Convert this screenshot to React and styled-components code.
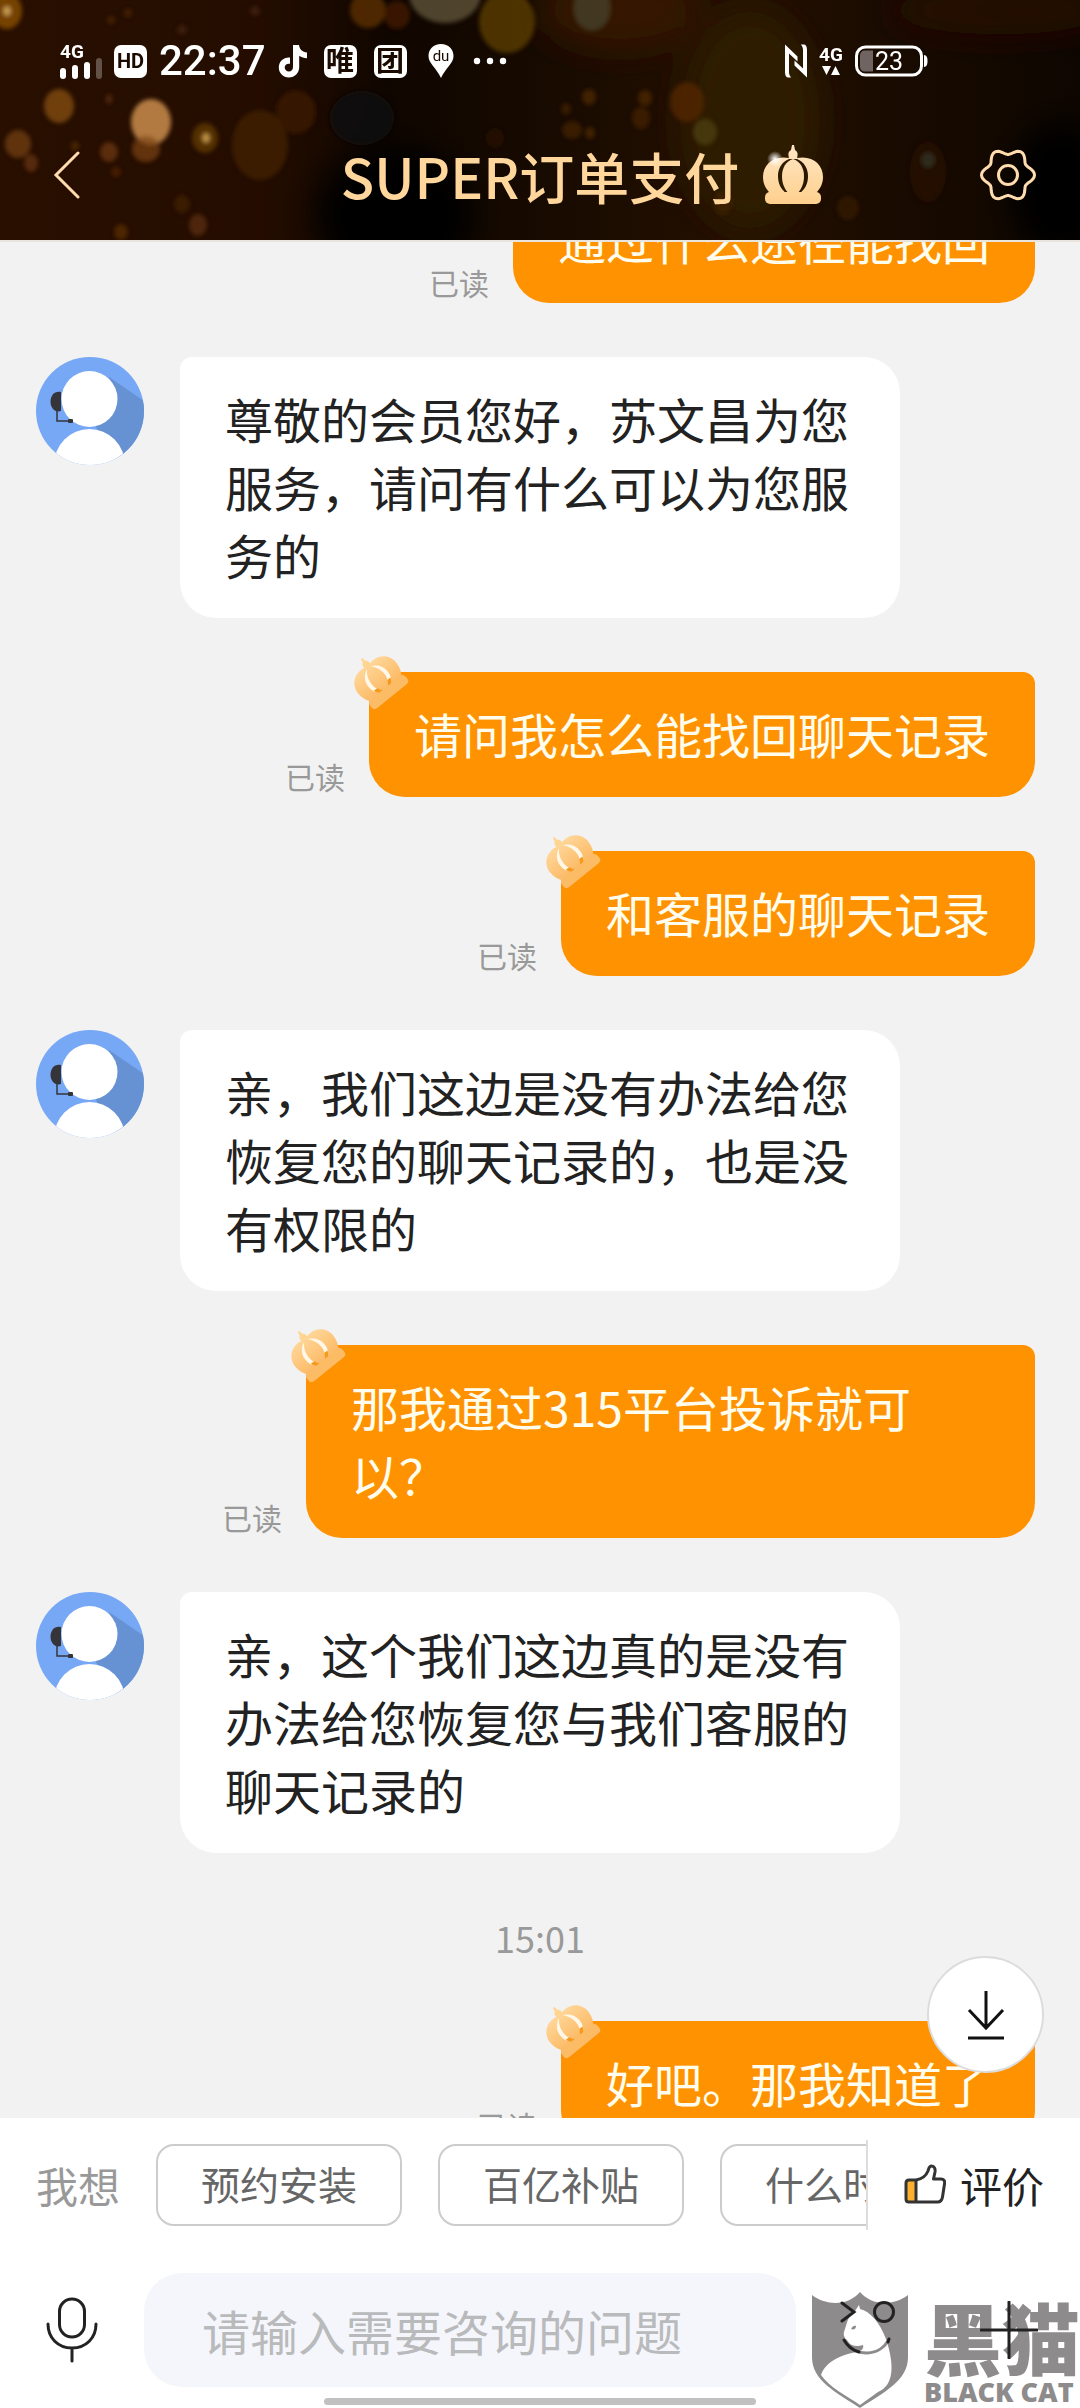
import styled, { createGlobalStyle } from "styled-components";
import { useLayoutEffect, useRef, useState } from "react";

const GlobalStyle = createGlobalStyle`
  * {
    box-sizing: border-box;
  }

  body {
    margin: 0;
    font-family: "Noto Sans CJK SC", sans-serif;
    background: #f2f2f2;
  }

  button {
    font-family: inherit;
    border: 0;
    padding: 0;
    background: none;
    cursor: pointer;
  }
`;

const Page = styled.div`
  display: flex;
  flex-direction: column;
  height: 100vh;
  overflow: hidden;
`;

const Header = styled.header`
  position: relative;
  flex: none;
  padding-bottom: 12px;
  overflow: hidden;
  background: #180b00;
  border-bottom: 2px solid #e9e4de;
`;

const Backdrop = styled.svg`
  position: absolute;
  inset: 0;
  width: 100%;
  height: 100%;
`;

const StatusBar = styled.div`
  position: relative;
  display: flex;
  align-items: center;
  justify-content: space-between;
  height: 122px;
  padding: 0 152px 0 60px;
  color: #fff;
  font-family: Roboto, "Noto Sans CJK SC", sans-serif;

  svg {
    overflow: visible;
  }
`;

const StatusGroup = styled.div`
  display: flex;
  align-items: center;
  gap: 12px;
`;

const AppGroup = styled.div`
  display: flex;
  align-items: center;
  gap: 17px;
  padding-left: 4px;
`;

const Clock = styled.span`
  font-size: 42px;
  line-height: 42px;
  font-weight: 500;
`;

const AppBadge = styled.span`
  display: flex;
  align-items: center;
  justify-content: center;
  width: 33px;
  height: 33px;
  border-radius: 7px;
  background: #fff;
  color: #1a0a00;
  font-size: ${({ $size }) => $size}px;
  line-height: 33px;
  font-weight: 700;
`;

const TitleBar = styled.div`
  position: relative;
  display: grid;
  grid-template-columns: 1fr auto 1fr;
  align-items: center;
  height: 106px;
  padding: 0 43px;

  svg {
    display: block;
  }
`;

const Title = styled.h1`
  margin: 0;
  color: #ffd79c;
  font-size: 55px;
  line-height: 80px;
  font-weight: 500;
`;

const TitleEnd = styled.div`
  display: flex;
  align-items: center;
  justify-content: space-between;
  padding-left: 24px;
`;

const BackButton = styled.button`
  width: 48px;
  height: 60px;
  padding-left: 10px;
`;

const ChatArea = styled.main`
  position: relative;
  flex: 1;
  min-height: 0;
`;

const MessageList = styled.div`
  display: flex;
  flex-direction: column;
  gap: 54px;
  height: 100%;
  padding: 54px 45px 54px 36px;
  overflow-y: auto;
  scrollbar-width: none;
`;

const Row = styled.div`
  display: flex;
  flex: none;
  align-items: ${({ $mine }) => ($mine ? "flex-end" : "flex-start")};
  justify-content: ${({ $mine }) => ($mine ? "flex-end" : "flex-start")};
  gap: ${({ $mine }) => ($mine ? 24 : 36)}px;

  > svg {
    flex: none;
  }
`;

const Bubble = styled.div`
  position: relative;
  max-width: ${({ $mine }) => ($mine ? 729 : 720)}px;
  padding: 27px 45px 30px;
  border-radius: ${({ $mine }) =>
    $mine ? "12px 12px 36px 36px" : "12px 36px 36px 36px"};
  background: ${({ $mine }) => ($mine ? "#ff9200" : "#fff")};
  color: ${({ $mine }) => ($mine ? "#fffdee" : "#222")};
  font-size: 48px;
  line-height: 68px;
`;

const CrownBadge = styled.svg`
  position: absolute;
  left: -20px;
  top: -24px;
`;

const ReadMark = styled.span`
  flex: none;
  color: #999;
  font-size: 30px;
  line-height: 42px;
`;

const TimeMark = styled.time`
  flex: none;
  /* the list is padded 9px more on the right than on the left */
  padding-left: 9px;
  text-align: center;
  color: #999;
  font-size: 36px;
  line-height: 60px;
`;

const ToBottom = styled.button`
  position: absolute;
  right: 36px;
  bottom: 45px;
  display: flex;
  align-items: center;
  justify-content: center;
  width: 117px;
  height: 117px;
  border: 2px solid #dcdcdc;
  border-radius: 50%;
  background: #fff;
`;

const Footer = styled.footer`
  position: relative;
  flex: none;
  background: #fff;
`;

const QuickRow = styled.div`
  display: flex;
  align-items: center;
  padding-top: 22px;
`;

const QuickLabel = styled.span`
  flex: none;
  padding: 0 36px;
  color: #999;
  font-size: 42px;
  line-height: 60px;
`;

const Chips = styled.div`
  display: flex;
  flex: 1;
  gap: 36px;
  min-width: 0;
  overflow: hidden;
`;

const Chip = styled.button`
  flex: none;
  height: 82px;
  padding: 0 43px 4px;
  border: 2px solid #ccc;
  border-radius: 18px;
  color: #666;
  font-size: 39px;
  line-height: 60px;
`;

const RateButton = styled.button`
  display: flex;
  flex: none;
  align-items: center;
  gap: 14px;
  height: 90px;
  padding: 0 36px;
  border-left: 2px solid #ddd;
  color: #222;
  font-size: 42px;
  line-height: 60px;
`;

const Composer = styled.form`
  position: relative;
  display: flex;
  align-items: center;
  padding: 43px 0 11px;
`;

const IconButton = styled.button`
  display: flex;
  flex: none;
  align-items: center;
  justify-content: center;
  width: ${({ $wide }) => ($wide ? 144 : 142)}px;
  height: 114px;
`;

const TextBox = styled.input`
  flex: 1;
  min-width: 0;
  height: 114px;
  padding: 0 58px;
  border: 0;
  border-radius: 38px;
  outline: 0;
  background: #f5f6fb;
  color: #222;
  font-family: inherit;
  font-size: 48px;

  &::placeholder {
    color: #b9babc;
    opacity: 1;
  }
`;

const HomeBar = styled.div`
  width: 40%;
  height: 7px;
  margin: 0 auto 3px;
  border-radius: 4px;
  background: #c1c1c1;
`;

const Watermark = styled.div`
  position: absolute;
  right: 0;
  bottom: 0;
  display: flex;
  align-items: flex-end;
  gap: 15px;
  color: #8e8b8c;
  pointer-events: none;

  svg {
    display: block;
  }
`;

const WatermarkName = styled.div`
  font-size: 78px;
  line-height: 80px;
  font-weight: 900;
`;

const WatermarkLatin = styled.div`
  font-family: "Open Sans", sans-serif;
  font-size: 27px;
  line-height: 32px;
  font-weight: 800;
`;

// cx, cy, rx, ry, colour, opacity
const lights = [
  [7, 11, 15, 18, "#8a5000", 0.8],
  [7, 11, 4, 5, "#d8b060", 0.8],
  [368, 10, 18, 18, "#5c2f02", 0.8],
  [397, 15, 13, 14, "#421b00", 0.8],
  [445, -6, 36, 29, "#544a30", 0.9],
  [507, 22, 28, 31, "#533606", 0.9],
  [592, 8, 19, 23, "#423c24", 0.9],
  [151, 122, 20, 23, "#b98045", 0.95],
  [146, 149, 14, 13, "#7c4512", 0.7],
  [59, 106, 15, 17, "#7c4812", 0.85],
  [205, 138, 13, 15, "#6a4008", 0.7],
  [206, 138, 4, 5, "#d6a850", 0.8],
  [18, 144, 13, 14, "#6a390c", 0.85],
  [31, 163, 7, 9, "#5c2d08", 0.9],
  [109, 152, 9, 10, "#64320a", 0.85],
  [260, 145, 28, 35, "#432405", 0.75],
  [296, 112, 20, 22, "#3d1a05", 0.75],
  [362, 118, 32, 27, "#121110", 0.9],
  [198, 225, 9, 11, "#55290a", 0.85],
  [182, 204, 8, 9, "#3d2006", 0.9],
  [121, 232, 7, 8, "#522706", 0.9],
  [75, 146, 4, 5, "#4b2706", 0.9],
  [116, 172, 5, 5, "#4a2006", 0.9],
  [109, 99, 4, 5, "#4c2608", 0.9],
  [128, 13, 4, 4, "#4c2608", 0.8],
  [111, 20, 4, 4, "#4c2608", 0.8],
  [182, 30, 5, 5, "#42200a", 0.8],
  [255, 11, 5, 5, "#42200a", 0.8],
  [687, 102, 17, 20, "#542402", 0.8],
  [705, 132, 12, 13, "#4e3f12", 0.8],
  [589, 97, 7, 8, "#452404", 0.9],
  [645, 98, 7, 8, "#452404", 0.9],
  [641, 118, 9, 11, "#3f1e04", 0.9],
  [572, 130, 10, 9, "#3f1e04", 0.9],
  [590, 133, 5, 6, "#452404", 0.9],
  [566, 109, 5, 6, "#3f1e04", 0.8],
  [495, 138, 9, 10, "#261200", 0.8],
  [723, 203, 9, 11, "#402004", 0.8],
  [848, 208, 11, 12, "#321a03", 0.8],
  [928, 172, 18, 30, "#281200", 0.8],
  [928, 160, 7, 8, "#303024", 0.8],
];

function HeaderBackdrop() {
  return (
    <Backdrop viewBox="0 0 1080 240" preserveAspectRatio="xMidYMid slice" aria-hidden="true">
      <defs>
        <linearGradient id="night" x1="0" x2="1" y1="0" y2="0">
          <stop offset="0" stopColor="#280f00" />
          <stop offset="0.24" stopColor="#240d00" />
          <stop offset="0.36" stopColor="#100600" />
          <stop offset="0.48" stopColor="#160a00" />
          <stop offset="0.68" stopColor="#241000" />
          <stop offset="0.86" stopColor="#170a00" />
          <stop offset="1" stopColor="#0e0600" />
        </linearGradient>
        <filter id="haze" x="-50%" y="-50%" width="200%" height="200%">
          <feGaussianBlur stdDeviation="16" />
        </filter>
        <filter id="soft" x="-50%" y="-50%" width="200%" height="200%">
          <feGaussianBlur stdDeviation="2" />
        </filter>
      </defs>
      <rect width="1080" height="240" fill="url(#night)" />
      <g filter="url(#haze)">
        <ellipse cx="395" cy="215" rx="80" ry="70" fill="#030000" />
        <ellipse cx="750" cy="120" rx="70" ry="110" fill="#2f1a00" />
        <ellipse cx="620" cy="10" rx="80" ry="40" fill="#361800" />
        <ellipse cx="1000" cy="10" rx="110" ry="24" fill="#261100" />
        <ellipse cx="1060" cy="190" rx="50" ry="70" fill="#040000" />
      </g>
      <g filter="url(#soft)">
        {lights.map(([cx, cy, rx, ry, fill, opacity], i) => (
          <ellipse key={i} cx={cx} cy={cy} rx={rx} ry={ry} fill={fill} opacity={opacity} />
        ))}
      </g>
    </Backdrop>
  );
}

function SignalIcon() {
  return (
    <svg width="42" height="38" viewBox="0 0 42 38" fill="#fff" aria-hidden="true">
      <text x="0" y="16" fontSize="19" fontWeight="700">4G</text>
      <rect x="0" y="26" width="6" height="11" rx="3" />
      <rect x="12" y="23" width="6" height="14" rx="3" />
      <rect x="24" y="20" width="6" height="17" rx="3" />
      <rect x="36" y="16" width="6" height="21" rx="3" opacity="0.28" />
    </svg>
  );
}

function NoteIcon() {
  return (
    <svg width="30" height="34" viewBox="0 0 30 34" aria-hidden="true">
      <path
        d="M15 1h6c.6 4.400 3.400 7 8 7.500v5.800c-3-.1-5.600-1-7.800-2.500V23c0 6-4.500 10.500-10.300 10.500C5.100 33.500.8 29 .8 23.500.8 17.500 5.800 13 12 13.600v6.200c-2.900-.6-5.300 1.100-5.300 3.700 0 2.300 1.900 4 4.200 4 2.400 0 4.100-1.700 4.100-4.500z"
        fill="#fff"
      />
    </svg>
  );
}

function PinIcon() {
  return (
    <svg width="32" height="34" viewBox="0 0 32 34" aria-hidden="true">
      <path d="M17 0C9.500 0 4.500 5.300 4.500 12c0 7.500 8 12 12.500 22 4.500-10 12.500-14.500 12.500-22C29.500 5.300 24.500 0 17 0z" fill="#fff" />
      <text x="17" y="17" fontSize="15" textAnchor="middle" fill="#1a0a00">du</text>
    </svg>
  );
}

function NfcIcon() {
  return (
    <svg width="22" height="34" viewBox="0 0 22 34" fill="#fff" aria-hidden="true">
      <path d="M0 .5 12.500 12.500v5L4 9.500V28c0 2.300.7 4 2.200 5.500H3.500C1 33.500 0 31.500 0 28z" />
      <path d="M22 33.500 9.500 21.500v-5l8.500 8V6c0-2.300-.7-4-2.200-5.500h2.700C21 .5 22 2.500 22 6z" />
    </svg>
  );
}

function DataIcon() {
  return (
    <svg width="24" height="32" viewBox="0 0 24 32" fill="#fff" aria-hidden="true">
      <text x="0" y="16" fontSize="19" fontWeight="700">4G</text>
      <path d="M3 21h9l-4.500 9zM12 30h9l-4.500-9z" />
    </svg>
  );
}

function BatteryIcon() {
  return (
    <svg width="73" height="32" viewBox="0 0 73 32" aria-hidden="true">
      <rect x="1.500" y="2" width="65" height="28" rx="9" fill="none" stroke="#fff" strokeWidth="3" />
      <path d="M10 5.500h8v21h-8c-3 0-5-2-5-5v-11c0-3 2-5 5-5z" fill="#706462" />
      <path d="M69 10c2.500.5 3.500 2 3.500 6s-1 5.500-3.500 6z" fill="#fff" />
      <text x="34" y="25" fontSize="25" textAnchor="middle" fill="#fff">23</text>
    </svg>
  );
}

function CrownIcon() {
  return (
    <svg width="60" height="60" viewBox="0 0 60 60" aria-hidden="true">
      <defs>
        <linearGradient id="gold" gradientUnits="userSpaceOnUse" x1="0" x2="0" y1="0" y2="60">
          <stop offset="0" stopColor="#ffe6c4" />
          <stop offset="1" stopColor="#ffcf8c" />
        </linearGradient>
        <radialGradient id="glint">
          <stop offset="0" stopColor="#fff" />
          <stop offset="1" stopColor="#fff" stopOpacity="0" />
        </radialGradient>
      </defs>
      <g fill="url(#gold)">
        <path d="M29 0h2l1 5c2 1 3 3 2.500 5.500L34 14h-8l-.5-3.500C25 8 26 6 28 5z" />
        <path d="M26 13C11 10 0 19 0 32c0 7 3 12 7 16h16c-5-4-8-9-8-17 0-8 4-14 11-17z" />
        <path d="M34 13c15-3 26 6 26 19 0 7-3 12-7 16H37c5-4 8-9 8-17 0-8-4-14-11-17z" />
        <path d="M30 14c-7 2-11 9-11 17 0 7 2 12 6 17h10c4-5 6-10 6-17 0-8-4-15-11-17z" />
        <rect x="2" y="47" width="56" height="12" rx="5" />
      </g>
      <circle cx="12" cy="14" r="8" fill="url(#glint)" />
    </svg>
  );
}

function gearPath(center, base, wave) {
  const points = [];
  for (let deg = 0; deg < 360; deg += 4) {
    const a = (deg * Math.PI) / 180;
    const r = base + wave * Math.cos(6 * a);
    points.push(`${(center + r * Math.cos(a)).toFixed(1)} ${(center + r * Math.sin(a)).toFixed(1)}`);
  }
  return `M${points.join("L")}Z`;
}

function GearIcon() {
  return (
    <svg width="58" height="58" viewBox="0 0 58 58" fill="none" stroke="#ffdcae" strokeWidth="3" strokeLinejoin="round" aria-hidden="true">
      <path d={gearPath(29, 23.5, 3)} />
      <circle cx="29" cy="29" r="9.500" />
    </svg>
  );
}

function Avatar() {
  return (
    <svg width="108" height="108" viewBox="0 0 108 108" role="img" aria-label="客服">
      <clipPath id="face">
        <circle cx="54" cy="54" r="54" />
      </clipPath>
      <g clipPath="url(#face)">
        <rect width="108" height="108" fill="#77a8f5" />
        <path d="M73 20 108 44v64H82L60 70z" fill="#6692d3" />
        <circle cx="53.500" cy="42" r="28" fill="#fff" />
        <ellipse cx="53.500" cy="108" rx="35.500" ry="36" fill="#fff" />
        <path d="M25 35v19c-6 2-10.500-3-10.500-9.500S19 33.500 25 35z" fill="#353539" />
        <path d="M21 54v10h14" fill="none" stroke="#353539" strokeWidth="1.500" />
        <rect x="32" y="62" width="5" height="4" rx="1" fill="#353539" />
      </g>
    </svg>
  );
}

function MessageCrown() {
  return (
    <CrownBadge width="62" height="62" viewBox="0 0 62 62" aria-hidden="true">
      <defs>
        <linearGradient id="peach" x1="0" x2="0" y1="0" y2="1">
          <stop offset="0" stopColor="#ffd698" />
          <stop offset="1" stopColor="#fcba66" />
        </linearGradient>
      </defs>
      <g transform="translate(29 31) rotate(-39) scale(0.820) translate(-30 -32)">
        <path d="M29 0h2l1 5c2 1 3 3 2.500 5.500L34 14h-8l-.5-3.500C25 8 26 6 28 5z" fill="#ffd592" />
        <path d="M30 12C11 6 0 18 0 31c0 7 3 13 6 17h48c3-4 6-10 6-17 0-13-11-25-30-19z" fill="url(#peach)" />
        <path d="M27 14c-8 4-12 10-12 18 0 6 2 10 6 15h6c-5-5-7-9-7-15 0-8 3-13 7-18z" fill="#fff8e8" />
        <path d="M33 14c8 4 12 10 12 18 0 6-2 10-6 15h-6c5-5 7-9 7-15 0-8-3-13-7-18z" fill="#fff8e8" />
        <path d="M17 40c1 3 2 5 4 7h6c-2-2-4-5-5-7zM43 40c-1 3-2 5-4 7h-6c2-2 4-5 5-7z" fill="#f79a1c" />
        <rect x="2" y="46" width="56" height="13" rx="5" fill="#fcbc66" />
      </g>
    </CrownBadge>
  );
}

function ThumbIcon() {
  return (
    <svg width="42" height="42" viewBox="0 0 42 42" fill="none" stroke="#333" strokeWidth="3" strokeLinejoin="round" aria-hidden="true">
      <path d="M2 16h10v22H5c-2 0-3-1-3-3z" fill="#fdb02e" stroke="none" />
      <path d="M12 16c6-1 10-4 12-9 1-3 1-5 3.500-5 3 0 4 3 3.500 6l-1.500 7H37c3 0 4 2 3.500 5l-2 13c-.5 3-2 5-5 5H5c-2 0-3-1-3-3V19c0-2 1-3 3-3z" />
      <path d="M12 16v22" />
    </svg>
  );
}

function Shield() {
  return (
    <svg width="98" height="116" viewBox="0 0 98 116" aria-hidden="true">
      <path
        d="M1 3c16 12 37 10 48-3 11 13 32 15 48 3v62c0 24-24 35-48 51C25 100 1 89 1 65z"
        fill="#8e8b8c"
      />
      <path
        d="M44 19 48 13l1 4c10 2 20 14 26 30 8 24 9 46-8 53l-18 13C36 104 18 95 10 83c5-14 22-21 36-23 5-1 7-4 6-7-6 2-12 1-15-3-3-3-5-7-4-10 3-8 3-15 11-21z"
        fill="#fff"
      />
      <path d="M34 48c10 18 35 17 44-1" fill="none" stroke="#8e8b8c" strokeWidth="3" />
      <path d="M40 37c1-3 4-4 5-3 0 3-2 4-5 3z" fill="#8e8b8c" />
    </svg>
  );
}

const history = [
  { mine: true, text: "通过什么途径能找回" },
  { text: "尊敬的会员您好，苏文昌为您服务，请问有什么可以为您服务的" },
  { mine: true, text: "请问我怎么能找回聊天记录" },
  { mine: true, text: "和客服的聊天记录" },
  { text: "亲，我们这边是没有办法给您恢复您的聊天记录的，也是没有权限的" },
  { mine: true, text: "那我通过315平台投诉就可以？" },
  { text: "亲，这个我们这边真的是没有办法给您恢复您与我们客服的聊天记录的" },
  { time: "15:01" },
  { mine: true, text: "好吧。那我知道了" },
];

const quickQuestions = ["预约安装", "百亿补贴", "什么时候"];

function Message({ mine, text }) {
  return (
    <Row $mine={mine}>
      {mine ? <ReadMark>已读</ReadMark> : <Avatar />}
      <Bubble $mine={mine}>
        {mine && <MessageCrown />}
        {text}
      </Bubble>
    </Row>
  );
}

export default function App() {
  const [draft, setDraft] = useState("");
  const list = useRef(null);

  useLayoutEffect(() => {
    list.current.scrollTop = 118;
  }, []);

  const scrollToBottom = () => {
    list.current.scrollTop = list.current.scrollHeight;
  };

  return (
    <Page>
      <GlobalStyle />
      <Header>
        <HeaderBackdrop />
        <StatusBar>
          <StatusGroup>
            <SignalIcon />
            <AppBadge $size={20}>HD</AppBadge>
            <Clock>22:37</Clock>
            <NoteIcon />
            <AppGroup>
              <AppBadge $size={28}>唯</AppBadge>
              <AppBadge $size={28}>团</AppBadge>
              <PinIcon />
              <svg width="34" height="8" viewBox="0 0 34 8" fill="#fff" aria-hidden="true">
                <circle cx="4" cy="4" r="3.200" />
                <circle cx="17" cy="4" r="3.200" />
                <circle cx="30" cy="4" r="3.200" />
              </svg>
            </AppGroup>
          </StatusGroup>
          <StatusGroup>
            <NfcIcon />
            <DataIcon />
            <BatteryIcon />
          </StatusGroup>
        </StatusBar>
        <TitleBar>
          <BackButton aria-label="返回">
            <svg width="28" height="48" viewBox="0 0 28 48" fill="none" stroke="#ffdcae" strokeWidth="3" aria-hidden="true">
              <path d="M25 2 3 24l22 22" strokeLinecap="round" />
            </svg>
          </BackButton>
          <Title>SUPER订单支付</Title>
          <TitleEnd>
            <CrownIcon />
            <button aria-label="设置">
              <GearIcon />
            </button>
          </TitleEnd>
        </TitleBar>
      </Header>

      <ChatArea>
        <MessageList ref={list}>
          {history.map((item, i) =>
            item.time ? (
              <TimeMark key={i}>{item.time}</TimeMark>
            ) : (
              <Message key={i} {...item} />
            )
          )}
        </MessageList>
        <ToBottom aria-label="回到底部" onClick={scrollToBottom}>
          <svg width="38" height="50" viewBox="0 0 38 50" fill="none" stroke="#111" strokeWidth="3" aria-hidden="true">
            <path d="M19 1v36M2 20l17 18 17-18M1 48h36" />
          </svg>
        </ToBottom>
      </ChatArea>

      <Footer>
        <Watermark>
          <Shield />
          <div>
            <WatermarkName>黑猫</WatermarkName>
            <WatermarkLatin>BLACK CAT</WatermarkLatin>
          </div>
        </Watermark>
        <QuickRow>
          <QuickLabel>我想</QuickLabel>
          <Chips>
            {quickQuestions.map((q) => (
              <Chip key={q}>{q}</Chip>
            ))}
          </Chips>
          <RateButton>
            <ThumbIcon />
            评价
          </RateButton>
        </QuickRow>
        <Composer onSubmit={(e) => e.preventDefault()}>
          <IconButton type="button" aria-label="语音" $wide>
            <svg width="52" height="68" viewBox="0 0 52 68" fill="none" stroke="#222" strokeWidth="3" strokeLinecap="round" aria-hidden="true">
              <rect x="13.500" y="3" width="25" height="38" rx="12.500" />
              <path d="M2 28c0 14 10 24 24 24s24-10 24-24M26 52v13" />
            </svg>
          </IconButton>
          <TextBox
            aria-label="输入消息"
            placeholder="请输入需要咨询的问题"
            value={draft}
            onChange={(e) => setDraft(e.target.value)}
          />
          <IconButton type="button" aria-label="表情">
            <svg width="56" height="58" viewBox="0 0 56 58" fill="none" stroke="#222" strokeWidth="3" strokeLinecap="round" aria-hidden="true">
              <path d="M3 2l12 9-12 9" />
              <circle cx="45" cy="11" r="9.500" />
              <path d="M5 39c4 7 8 10 15 12M50 38l-1 3" />
            </svg>
          </IconButton>
          <IconButton type="button" aria-label="更多">
            <svg width="58" height="58" viewBox="0 0 58 58" fill="none" stroke="#222" strokeWidth="3" strokeLinecap="round" aria-hidden="true">
              <path d="M29 1v56M1 29h56" />
            </svg>
          </IconButton>
        </Composer>
        <HomeBar />
      </Footer>
    </Page>
  );
}
